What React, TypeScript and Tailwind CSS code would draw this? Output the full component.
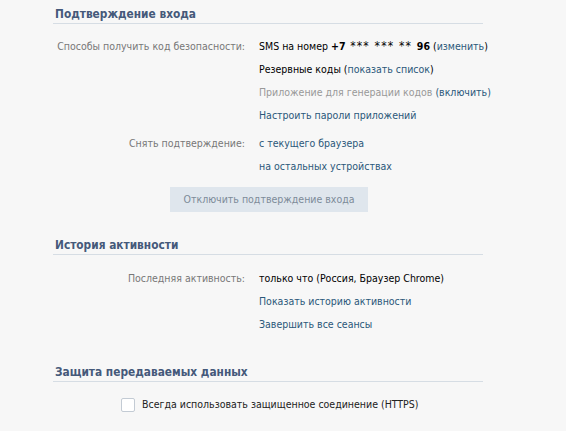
import React from 'react';

const Row: React.FC<{ label?: string; children: React.ReactNode }> = ({ label, children }) => (
  <div className="flex h-[23px] items-center">
    <div className="w-[192px] shrink-0 text-right whitespace-nowrap text-[#777]">{label}</div>
    <div className="pl-[14px] whitespace-nowrap">{children}</div>
  </div>
);

const Heading: React.FC<{ title: string; className?: string }> = ({ title, className = '' }) => (
  <h2
    className={`border-b border-[#d6dde4] pl-[2px] text-[11.8px] leading-[17px] font-bold text-[#45597a] ${className}`}
  >
    {title}
  </h2>
);

const Link: React.FC<{ children: React.ReactNode }> = ({ children }) => (
  <a href="#" className="text-[#2b587a] hover:underline">
    {children}
  </a>
);

const App: React.FC = () => {
  return (
    <div
      className="min-h-screen bg-[#f7f7f7] text-[10.5px] text-black"
      style={{ fontFamily: '"DejaVu Sans Condensed", "DejaVu Sans", sans-serif' }}
    >
      <div className="ml-[53px] w-[430px] pt-[6px]">
        <Heading title="Подтверждение входа" />

        <div className="mt-[11px]">
          <Row label="Способы получить код безопасности:">
            SMS на номер <b>+7</b>
            <span className="text-[12px] leading-none tracking-[1.2px]"> *** *** ** </span>
            <b>96</b> (<Link>изменить</Link>)
          </Row>
          <Row>
            Резервные коды (<Link>показать список</Link>)
          </Row>
          <Row>
            <span className="text-[#999]">Приложение для генерации кодов</span>{' '}
            <span className="text-[#2b587a]">(включить)</span>
          </Row>
          <Row>
            <Link>Настроить пароли приложений</Link>
          </Row>
        </div>

        <div className="mt-[5px]">
          <Row label="Снять подтверждение:">
            <Link>с текущего браузера</Link>
          </Row>
          <Row>
            <Link>на остальных устройствах</Link>
          </Row>
        </div>

        <button className="mt-[9px] ml-[117px] h-[25px] w-[198px] bg-[#dfe6ed] text-[#7d8b99]">
          Отключить подтверждение входа
        </button>

        <Heading title="История активности" className="mt-[25px]" />

        <div className="mt-[12px]">
          <Row label="Последняя активность:">только что (Россия, Браузер Chrome)</Row>
          <Row>
            <Link>Показать историю активности</Link>
          </Row>
          <Row>
            <Link>Завершить все сеансы</Link>
          </Row>
        </div>

        <Heading title="Защита передаваемых данных" className="mt-[28px]" />

        <label className="mt-[11px] ml-[68px] flex h-[23px] items-center gap-[7px]">
          <span className="h-[14px] w-[14px] rounded-[2px] border border-[#c3cbd4] bg-white" />
          <span className="text-[#222]">Всегда использовать защищенное соединение (HTTPS)</span>
        </label>
      </div>
    </div>
  );
};

export default App;
